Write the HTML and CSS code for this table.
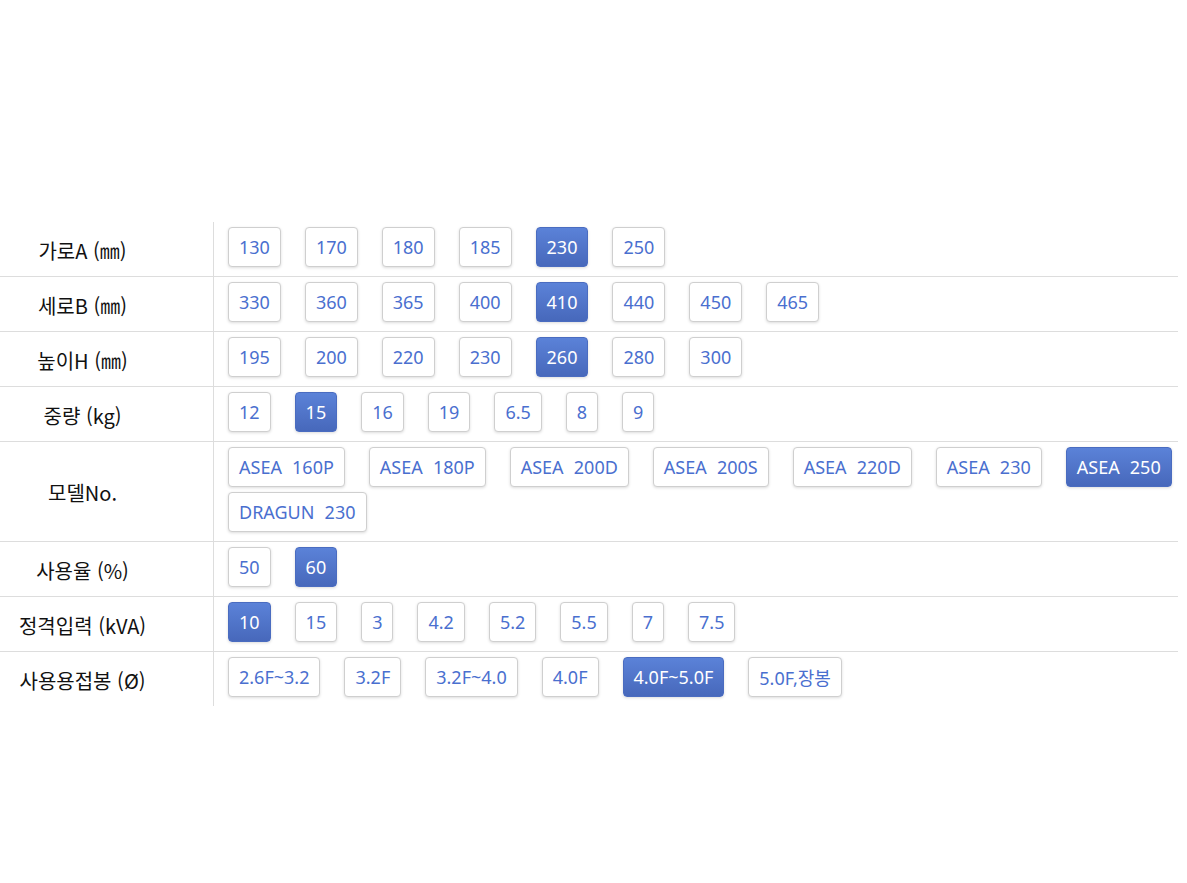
FILE: index.html
```html
<!DOCTYPE html>
<html lang="ko">
<head>
<meta charset="utf-8">
<title>사양 선택</title>
<link rel="stylesheet" href="styles.css">
</head>
<body>
<div class="spec">
  <div class="row first">
    <div class="label">가로A (㎜)</div>
    <div class="opts">
      <span class="opt">130</span><span class="opt">170</span><span class="opt">180</span><span class="opt">185</span><span class="opt on">230</span><span class="opt">250</span>
    </div>
  </div>
  <div class="row">
    <div class="label">세로B (㎜)</div>
    <div class="opts">
      <span class="opt">330</span><span class="opt">360</span><span class="opt">365</span><span class="opt">400</span><span class="opt on">410</span><span class="opt">440</span><span class="opt">450</span><span class="opt">465</span>
    </div>
  </div>
  <div class="row">
    <div class="label">높이H (㎜)</div>
    <div class="opts">
      <span class="opt">195</span><span class="opt">200</span><span class="opt">220</span><span class="opt">230</span><span class="opt on">260</span><span class="opt">280</span><span class="opt">300</span>
    </div>
  </div>
  <div class="row">
    <div class="label">중량 (kg)</div>
    <div class="opts">
      <span class="opt">12</span><span class="opt on">15</span><span class="opt">16</span><span class="opt">19</span><span class="opt">6.5</span><span class="opt">8</span><span class="opt">9</span>
    </div>
  </div>
  <div class="row">
    <div class="label">모델No.</div>
    <div class="opts">
      <span class="opt">ASEA 160P</span><span class="opt">ASEA 180P</span><span class="opt">ASEA 200D</span><span class="opt">ASEA 200S</span><span class="opt">ASEA 220D</span><span class="opt">ASEA 230</span><span class="opt on">ASEA 250</span><span class="opt">DRAGUN 230</span>
    </div>
  </div>
  <div class="row">
    <div class="label">사용율 (%)</div>
    <div class="opts">
      <span class="opt">50</span><span class="opt on">60</span>
    </div>
  </div>
  <div class="row">
    <div class="label">정격입력 (kVA)</div>
    <div class="opts">
      <span class="opt on">10</span><span class="opt">15</span><span class="opt">3</span><span class="opt">4.2</span><span class="opt">5.2</span><span class="opt">5.5</span><span class="opt">7</span><span class="opt">7.5</span>
    </div>
  </div>
  <div class="row">
    <div class="label">사용용접봉 (Ø)</div>
    <div class="opts">
      <span class="opt">2.6F~3.2</span><span class="opt">3.2F</span><span class="opt">3.2F~4.0</span><span class="opt">4.0F</span><span class="opt on">4.0F~5.0F</span><span class="opt">5.0F,장봉</span>
    </div>
  </div>
</div>
</body>
</html>
```
FILE: styles.css
```css
html, body {
  margin: 0;
  padding: 0;
  background: #fff;
}
body {
  font-family: "Noto Sans", "Noto Sans CJK KR", sans-serif;
}
.spec {
  width: 1178px;
  margin-top: 222px;
}
.row {
  display: grid;
  grid-template-columns: 214px 1fr;
  border-top: 1px solid #dddddd;
}
.row.first {
  border-top: none;
}
.label {
  border-right: 1px solid #dddddd;
  padding-right: 48px;
  padding-top: 2px;
  display: flex;
  align-items: center;
  justify-content: center;
  font-family: "Noto Sans CJK KR", sans-serif;
  font-size: 20px;
  color: #111;
  white-space: nowrap;
}
.opts {
  display: flex;
  flex-wrap: wrap;
  column-gap: 24px;
  row-gap: 5px;
  padding: 5px 2px 9px 14px;
}
.opt {
  box-sizing: border-box;
  height: 40px;
  padding: 0 10px;
  display: inline-flex;
  align-items: center;
  border: 1px solid #cfcfcf;
  border-radius: 4px;
  background: #fff;
  box-shadow: 0 1px 3px rgba(0, 0, 0, 0.14);
  color: #4a6fcf;
  font-family: "Noto Sans", "Noto Sans CJK KR", sans-serif;
  font-size: 18px;
  word-spacing: 5.5px;
  white-space: nowrap;
}
.opt.on {
  background: linear-gradient(#5b82d8, #4768bb);
  border-color: #4a6cc0;
  color: #fff;
}
```
